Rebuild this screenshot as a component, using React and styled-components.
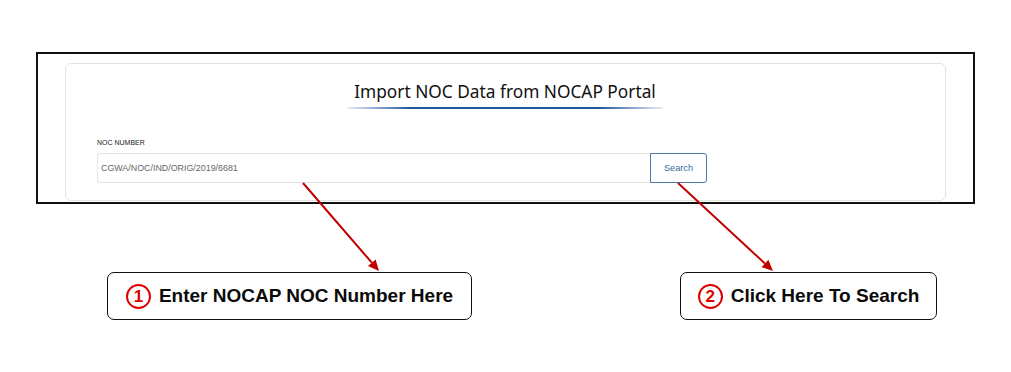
import styled, { createGlobalStyle } from "styled-components";

const GlobalStyle = createGlobalStyle`
  html, body {
    margin: 0;
    padding: 0;
    background: #ffffff;
  }
`;

const Page = styled.div`
  position: relative;
  width: 1011px;
  height: 372px;
  padding-top: 52px;
  box-sizing: border-box;
`;

const Frame = styled.div`
  margin-left: 36px;
  width: 939px;
  height: 152px;
  border: 2px solid #111;
  box-sizing: border-box;
  padding: 9px 27px 0 27px;
  overflow: hidden;
`;

const Card = styled.div`
  height: 138px;
  box-sizing: border-box;
  border: 1px solid #dde8dc;
  border-radius: 6px;
  padding: 16px 32px 0 31px;
  display: flex;
  flex-direction: column;
`;

const TitleWrap = styled.div`
  display: flex;
  flex-direction: column;
  align-items: center;
`;

const Title = styled.h2`
  margin: 0;
  font-family: "Noto Sans", sans-serif;
  font-weight: 400;
  font-size: 17.3px;
  line-height: 24px;
  color: #111;
`;

const Underline = styled.div`
  width: 316px;
  height: 2px;
  margin-top: 3px;
  background: linear-gradient(
    90deg,
    rgba(30, 90, 160, 0.1) 0%,
    #1e5aa0 20%,
    #1e5aa0 80%,
    rgba(30, 90, 160, 0.1) 100%
  );
  border-radius: 2px;
`;

const Label = styled.label`
  margin-top: 29px;
  font-family: "Liberation Sans", sans-serif;
  font-size: 7px;
  color: #222;
  line-height: 10px;
`;

const InputRow = styled.div`
  display: flex;
  margin-top: 5px;
`;

const Input = styled.input`
  width: 553px;
  height: 30px;
  box-sizing: border-box;
  border: 1px solid #e2e2e2;
  border-right: none;
  border-radius: 3px 0 0 3px;
  padding: 0 3px;
  font-family: "Liberation Sans", sans-serif;
  font-size: 8.9px;
  color: #666;
  outline: none;
`;

const SearchButton = styled.button`
  width: 57px;
  height: 30px;
  box-sizing: border-box;
  border: 1px solid #4d78a8;
  border-radius: 0 3px 3px 0;
  background: #fff;
  color: #3d6aa0;
  font-family: "Liberation Sans", sans-serif;
  font-size: 9.2px;
  cursor: pointer;
`;

const CalloutRow = styled.div`
  display: flex;
  margin-top: 68px;
  padding-left: 107px;
  gap: 208px;
`;

const Callout = styled.div`
  width: ${(p) => p.$w}px;
  height: 48px;
  box-sizing: border-box;
  border: 1.5px solid #111;
  border-radius: 7px;
  display: flex;
  align-items: center;
  justify-content: center;
  gap: 8px;
  font-family: "Liberation Sans", sans-serif;
  font-weight: 700;
  font-size: 19px;
  color: #0a0a0a;
`;

const Num = styled.span`
  width: 25px;
  height: 25px;
  box-sizing: border-box;
  border: 2px solid #e00000;
  border-radius: 50%;
  display: inline-flex;
  align-items: center;
  justify-content: center;
  color: #e00000;
  font-size: 17px;
  font-weight: 700;
  line-height: 1;
`;

const Arrows = styled.svg`
  position: absolute;
  top: 0;
  left: 0;
  pointer-events: none;
`;

function Arrow({ x1, y1, x2, y2 }) {
  const dx = x2 - x1;
  const dy = y2 - y1;
  const len = Math.hypot(dx, dy);
  const ux = dx / len;
  const uy = dy / len;
  const hl = 11;
  const hw = 5;
  const bx = x2 - ux * hl;
  const by = y2 - uy * hl;
  return (
    <g>
      <line x1={x1} y1={y1} x2={bx} y2={by} stroke="#c00000" strokeWidth="2" />
      <polygon
        points={`${x2},${y2} ${bx - uy * hw},${by + ux * hw} ${bx + uy * hw},${by - ux * hw}`}
        fill="#c00000"
      />
    </g>
  );
}

export default function App() {
  return (
    <>
      <GlobalStyle />
      <Page>
        <Frame>
          <Card>
            <TitleWrap>
              <Title>Import NOC Data from NOCAP Portal</Title>
              <Underline />
            </TitleWrap>
            <Label>NOC NUMBER</Label>
            <InputRow>
              <Input defaultValue="CGWA/NOC/IND/ORIG/2019/6681" />
              <SearchButton>Search</SearchButton>
            </InputRow>
          </Card>
        </Frame>
        <CalloutRow>
          <Callout $w={365}>
            <Num>1</Num>
            Enter NOCAP NOC Number Here
          </Callout>
          <Callout $w={257}>
            <Num>2</Num>
            Click Here To Search
          </Callout>
        </CalloutRow>
        <Arrows width="1011" height="372">
          <Arrow x1={303} y1={183} x2={379} y2={271} />
          <Arrow x1={678} y1={183} x2={773} y2={271} />
        </Arrows>
      </Page>
    </>
  );
}
